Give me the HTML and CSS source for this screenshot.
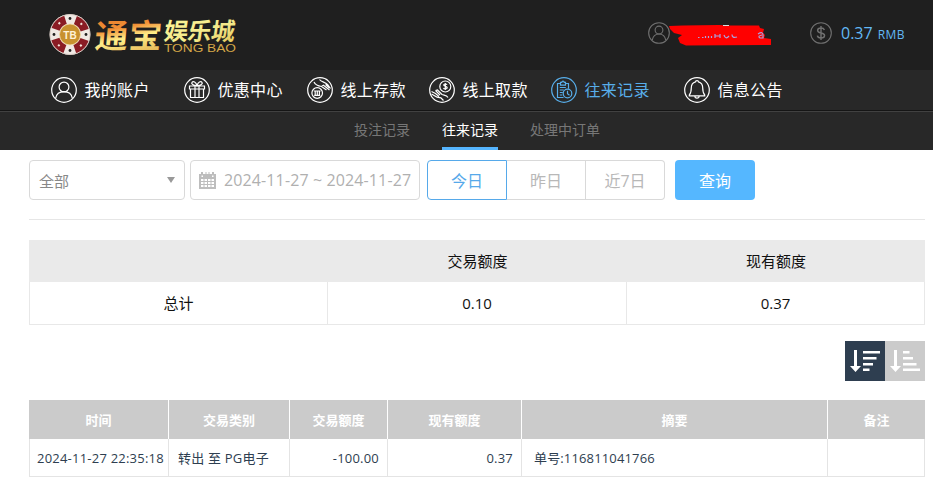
FILE: index.html
```html
<!DOCTYPE html>
<html lang="zh-CN">
<head>
    <meta charset="UTF-8">
    <meta name="viewport" content="width=device-width, initial-scale=1.0">
    <title>往来记录</title>
    <link rel="stylesheet" href="styles.css">
</head>
<body>
    <header class="header">
        <svg class="logo" width="190" height="46" viewBox="0 0 190 46">
            <defs>
                <linearGradient id="gold" x1="0" y1="0" x2="0.3" y2="1">
                    <stop offset="0" stop-color="#e3792b"/>
                    <stop offset="0.4" stop-color="#f08f35"/>
                    <stop offset="0.65" stop-color="#fff08a"/>
                    <stop offset="1" stop-color="#e8b95a"/>
                </linearGradient>
                <linearGradient id="yellow" x1="0" y1="0" x2="1" y2="1">
                    <stop offset="0" stop-color="#fff79a"/>
                    <stop offset="0.6" stop-color="#f3e98a"/>
                    <stop offset="1" stop-color="#e2c04f"/>
                </linearGradient>
            </defs>
            <!-- chip -->
            <circle cx="22" cy="22.5" r="20.3" fill="#f0e9e4"/>
            <circle cx="22" cy="22.5" r="15.5" fill="none" stroke="#8a1c24" stroke-width="9" stroke-dasharray="14.17 10.17" stroke-dashoffset="-5.09"/>
            <circle cx="22" cy="22.5" r="15.5" fill="none" stroke="#f4e6dc" stroke-width="2" stroke-dasharray="2 22.34" stroke-dashoffset="-11.17"/>
            <circle cx="22" cy="22.5" r="20" fill="none" stroke="#d8ccc4" stroke-width="1"/>
            <circle cx="22" cy="22.5" r="10.5" fill="#c8912f" stroke="#f0dcae" stroke-width="0.8"/>
            <g fill="#222">
                <circle cx="22" cy="6.500" r="1.400"/>
                <circle cx="22" cy="38.500" r="1.400"/>
                <circle cx="6" cy="22.500" r="1.400"/>
                <circle cx="38" cy="22.500" r="1.400"/>
            </g>
            <text class="logo-tb" x="22" y="26.5" text-anchor="middle">TB</text>
            <text class="logo-big" transform="translate(46 36) skewX(-5)" fill="url(#gold)" textLength="67" lengthAdjust="spacing">通宝</text>
            <text class="logo-mid" transform="translate(115 28) skewX(-8)" fill="url(#yellow)" textLength="71" lengthAdjust="spacing">娱乐城</text>
            <text class="logo-en" x="116" y="39.5" textLength="72" lengthAdjust="spacingAndGlyphs">TONG BAO</text>
        </svg>

        <div class="user">
            <svg class="info-icon" viewBox="0 0 26 26">
                <circle cx="13" cy="13" r="12.2"/>
                <circle cx="13" cy="9.5" r="4.6"/>
                <path d="M5 21.5c.8-4.8 4-7.4 8-7.4s7.2 2.6 8 7.4"/>
            </svg>
            <svg class="mask" width="106" height="26" viewBox="0 0 106 26">
                <path fill="#f00" d="M0 4L14 3.500 50 3 58 3.500 90 3.500 91 6 95 7 94 11 96 13 95 16 102 17 102 23 17 23.500 11 21 9 16 13 13 5 11 1 7z"/>
                <path fill="none" stroke="#a7a3e0" stroke-width="1.200" d="M29 15.500h1.500M33 15.500h1.500M36.500 16v-2M39.500 16v-2M42.500 16v-2M46 16v-4M51 16v-4M46 14h5M55 13q1.500 5 5 1M63 12.500q0 4 5 2.500M89 12q5-3 5 1v3h-3q-3-2 2-3"/>
                <path stroke="#ddd" stroke-width="1" d="M54 3.500h6"/>
            </svg>
        </div>

        <div class="balance">
            <svg class="info-icon" viewBox="0 0 26 26">
                <circle cx="13" cy="13" r="12.2"/>
                <path stroke-width="1.700" d="M17 9.500c-.5-1.500-1.900-2.300-4-2.300-2.300 0-4 1-4 2.900 0 4.300 8.200 1.500 8.200 5.900 0 1.900-1.800 3-4.200 3-2.300 0-4-1-4.300-2.800M13 4.800v16.500"/>
            </svg>
            <span class="amount">0.37</span>
            <span class="unit">RMB</span>
        </div>
    </header>

    <nav class="nav">
        <a class="nav-item">
            <svg class="nav-icon" viewBox="0 0 26 26">
                <circle cx="13" cy="13" r="12.3"/>
                <circle cx="13" cy="10" r="4.900"/>
                <path d="M4.600 21.500c.8-4.500 4-6.800 8.400-6.800s7.600 2.300 8.400 6.800"/>
            </svg>
            <span>我的账户</span>
        </a>
        <a class="nav-item">
            <svg class="nav-icon" viewBox="0 0 26 26">
                <circle cx="13" cy="13" r="12.3"/>
                <path d="M5.500 9h15v3h-15zM6.500 12v8.500h13V12M11 9v11.500M15 9v11.500M13 8.500C9 8.500 7 7 8 5.300c1.200-1.600 4-.3 5 3.200 1-3.500 3.800-4.800 5-3.200 1 1.700-1 3.200-5 3.200z"/>
            </svg>
            <span>优惠中心</span>
        </a>
        <a class="nav-item">
            <svg class="nav-icon" viewBox="0 0 26 26">
                <circle cx="13" cy="13" r="12.3"/>
                <circle cx="10.200" cy="16" r="5.300"/>
                <path d="M6.800 14h6.800M7.200 18.300h6M8.200 14v4M10.300 14v4M12.400 14v4M7 5c1.500 3.500 4.500 4 7.500 4.500M12.500 2.500c2 2.800 6 2.500 8.500 5.500l2.500 3.500M14.500 9.500l5 3.500M14.500 9.500l2-1.200 6 4.700M18.500 7.500l4 3.500"/>
            </svg>
            <span>线上存款</span>
        </a>
        <a class="nav-item">
            <svg class="nav-icon" viewBox="0 0 26 26">
                <circle cx="13" cy="13" r="12.3"/>
                <circle cx="16.300" cy="9.500" r="5.500"/>
                <path d="M18 7.700c-.5-1-3.300-1-3.300.4 0 1.600 3.500.9 3.500 2.700 0 1.500-3.200 1.500-3.700.3M16.300 6v7M2.500 14.500l4 2 3.500 3M6.500 13.500l4.500 4.500M2.500 17c3.500 1.500 5 4.500 9 3.500M6.500 13.500l2-.5 4.500 4.500c2 1 4.500.5 6 3M11.500 20.500l3 3"/>
            </svg>
            <span>线上取款</span>
        </a>
        <a class="nav-item active">
            <svg class="nav-icon" viewBox="0 0 26 26">
                <circle cx="13" cy="13" r="12.3"/>
                <path d="M12.500 20.500h-6v-14h3v1.700h5V6.500h3v5.300M9.500 6.500V5.300h1.300c.2-1.500 2.200-1.500 2.400 0h1.300v1.200M8.800 10.500h6M8.800 13h4M8.800 15.500h3M8.800 18h2.500"/>
                <circle cx="16.500" cy="16.500" r="4.300"/>
                <path d="M16.500 13.800v3l2 1.500"/>
            </svg>
            <span>往来记录</span>
        </a>
        <a class="nav-item">
            <svg class="nav-icon" viewBox="0 0 26 26">
                <circle cx="13" cy="13" r="12.3"/>
                <path d="M11.500 4.800c0-1.700 3-1.700 3 0 3 .8 4.200 3.200 4.200 6 0 4.200.5 5.500 2 7.200v.8H5.300V18c1.500-1.700 2-3 2-7.200 0-2.800 1.200-5.200 4.200-6zM10.800 19c.2 2.800 4.200 2.800 4.400 0"/>
            </svg>
            <span>信息公告</span>
        </a>
    </nav>

    <div class="sub-nav">
        <a>投注记录</a>
        <a class="active">往来记录</a>
        <a>处理中订单</a>
    </div>

    <main class="main">
        <div class="filters">
            <div class="select">
                <span>全部</span>
                <svg width="8" height="6" viewBox="0 0 8 6"><path fill="#999" d="M0 0h8L4 6z"/></svg>
            </div>
            <div class="date">
                <svg width="17" height="17" viewBox="0 0 17 17">
                    <path fill="#bdbdbd" d="M0 2h2V0h2v2h2.500V0h1v2h2V0h1v2H13V0h2v2h2v15H0z"/>
                    <path fill="#fff" d="M2 7h13v8H2zM2.500 3.500h1.500V5H2.500zM13 3.500h1.500V5H13z"/>
                    <path fill="none" stroke="#bdbdbd" stroke-width="1" d="M2 9.500h13M2 12.500h13M5 7v8M8.500 7v8M12 7v8"/>
                </svg>
                <span>2024-11-27 ~ 2024-11-27</span>
            </div>
            <div class="days">
                <button type="button" class="active">今日</button>
                <button type="button">昨日</button>
                <button type="button">近7日</button>
            </div>
            <button type="button" class="search">查询</button>
        </div>

        <table class="summary">
            <colgroup>
                <col class="col-label">
                <col class="col-trade">
                <col class="col-current">
            </colgroup>
            <tr>
                <th></th>
                <th>交易额度</th>
                <th>现有额度</th>
            </tr>
            <tr>
                <td>总计</td>
                <td>0.10</td>
                <td>0.37</td>
            </tr>
        </table>

        <div class="sort">
            <div class="sort-btn active">
                <svg width="40" height="40" viewBox="0 0 40 40">
                    <path fill="#fff" d="M9 9h3v16h4l-5.500 6L5 25h4zM18 10h17v2.500H18zM18 16h13.500v2.500H18zM18 22h10v2.500H18zM18 27.500h6.500V30H18z"/>
                </svg>
            </div>
            <div class="sort-btn">
                <svg width="40" height="40" viewBox="0 0 40 40">
                    <path fill="#fff" d="M9 9h3v16h4l-5.500 6L5 25h4zM18 10h6.500v2.500H18zM18 16h10v2.500H18zM18 22h13.500v2.500H18zM18 27.500h17V30H18z"/>
                </svg>
            </div>
        </div>

        <table class="records">
            <colgroup>
                <col class="col-time">
                <col class="col-type">
                <col class="col-amount">
                <col class="col-balance">
                <col class="col-summary">
                <col class="col-remark">
            </colgroup>
            <tr>
                <th>时间</th>
                <th>交易类别</th>
                <th>交易额度</th>
                <th>现有额度</th>
                <th>摘要</th>
                <th>备注</th>
            </tr>
            <tr>
                <td class="time">2024-11-27 22:35:18</td>
                <td class="type">转出 至 PG电子</td>
                <td class="num">-100.00</td>
                <td class="num">0.37</td>
                <td class="order">单号:116811041766</td>
                <td></td>
            </tr>
        </table>
    </main>
</body>
</html>
```
FILE: styles.css
```css
* {
    box-sizing: border-box;
}

body {
    margin: 0;
    height: 478px;
    overflow: hidden;
    background: #fff;
    font-family: "Open Sans", "Noto Sans CJK SC", sans-serif;
    color: #222;
}

/* header */
.header {
    display: flex;
    align-items: flex-start;
    height: 70px;
    padding-left: 48px;
    background: #1f1f1f;
}

.logo {
    margin-top: 12px;
}

.logo-tb {
    font: bold 10px "Liberation Sans", sans-serif;
    fill: #fff3d6;
}

.logo-big {
    font-size: 33px;
    font-weight: 700;
}

.logo-mid {
    font-size: 24px;
    font-weight: 700;
}

.logo-en {
    font: 10.5px "Liberation Sans", sans-serif;
    fill: #d6a848;
}

.user {
    display: flex;
    width: 162px;
    margin: 22px 0 0 410px;
}

.info-icon {
    flex: none;
    width: 22px;
    height: 22px;
    fill: none;
    stroke: #707070;
    stroke-width: 1.3;
}

.mask {
    margin-left: -1px;
}

.balance {
    display: flex;
    align-items: baseline;
    margin-top: 22px;
    line-height: 22px;
    color: #62b8f5;
}

.balance .info-icon {
    align-self: flex-start;
}

.amount {
    margin: 0 5px 0 9px;
    font-size: 16px;
}

.unit {
    font-size: 12px;
    letter-spacing: 0.5px;
}

/* main nav */
.nav {
    display: grid;
    grid-template-columns: 133px 123px 122px 122px 133px 100px;
    align-items: center;
    height: 40px;
    padding-left: 51px;
    background: #282828;
}

.nav-item {
    display: flex;
    align-items: center;
    gap: 7.5px;
    font-size: 16px;
    line-height: 26px;
    letter-spacing: 0.3px;
    color: #fff;
    white-space: nowrap;
}

.nav-item.active {
    color: #58aeea;
}

.nav-icon {
    width: 26px;
    height: 26px;
    fill: none;
    stroke: currentColor;
    stroke-width: 1.2;
}

.sub-nav {
    display: flex;
    gap: 32px;
    height: 40px;
    padding-left: 354px;
    border-top: 1px solid #151515;
    box-shadow: inset 0 1px #414141;
    background: #282828;
    font-size: 14px;
    line-height: 38px;
    color: #777;
}

.sub-nav .active {
    color: #fff;
    border-bottom: 3px solid #55b5ff;
}

/* filters */
.main {
    padding: 10px 8px 0 29px;
}

.filters {
    display: flex;
    height: 60px;
    padding-bottom: 19px;
    border-bottom: 1px solid #e6e6e6;
    font-size: 16px;
    color: #b0b0b0;
}

.select,
.date {
    display: flex;
    align-items: center;
    height: 40px;
    border: 1px solid #d9d9d9;
    border-radius: 4px;
}

.select {
    justify-content: space-between;
    width: 156px;
    padding: 0 9px;
    font-size: 15px;
    color: #888;
}

.date {
    width: 230px;
    margin: 0 7px 0 5px;
    padding-left: 8px;
    gap: 8px;
    letter-spacing: 0.12px;
    white-space: nowrap;
}

.days {
    display: flex;
}

.filters button {
    height: 40px;
    padding: 0;
    font-family: inherit;
    font-size: 16px;
}

.days button {
    width: 79px;
    border: 1px solid #d9d9d9;
    border-left: 0;
    background: #fff;
    color: #b8b8b8;
}

.days button:last-child {
    border-radius: 0 4px 4px 0;
}

.days .active {
    width: 80px;
    border: 1px solid #56a9ea;
    border-radius: 4px 0 0 4px;
    color: #56a9ea;
}

.filters .search {
    width: 80px;
    margin-left: 10px;
    border: 0;
    border-radius: 4px;
    background: #55b7ff;
    color: #fff;
}

/* tables */
table {
    width: 896px;
    table-layout: fixed;
    border-collapse: separate;
    border-spacing: 0;
}

.summary {
    margin-top: 20px;
    font-size: 15px;
    text-align: center;
    color: #111;
}

.col-label { width: 299px; }
.col-trade { width: 299px; }
.col-current { width: 298px; }

.summary th {
    height: 42px;
    padding: 0 0 2px;
    background: #eaeaea;
    font-weight: 400;
}

.summary td {
    height: 43px;
    padding: 0 0 1px;
    border-right: 1px solid #e8e8e8;
    border-bottom: 1px solid #e8e8e8;
}

.summary td:first-child {
    border-left: 1px solid #e8e8e8;
}

.sort {
    display: flex;
    justify-content: flex-end;
    height: 40px;
    margin: 16px 0 19px;
}

.sort-btn {
    width: 40px;
    height: 40px;
    background: #cbcbcb;
}

.sort-btn.active {
    background: #2e3e50;
}

.sort-btn svg {
    display: block;
}

.records {
    font-size: 13px;
    color: #2e3e50;
}

.col-time { width: 140px; }
.col-type { width: 121px; }
.col-amount { width: 98px; }
.col-balance { width: 134px; }
.col-summary { width: 306px; }
.col-remark { width: 97px; }

.records th {
    height: 39px;
    padding: 0 0 1px;
    border-right: 1px solid #fff;
    background: #cbcbcb;
    color: #fff;
}

.records th:last-child {
    border-right: 0;
}

.records td {
    height: 38px;
    padding: 0 8px 0 9px;
    border-right: 1px solid #e4e4e4;
    border-bottom: 1px solid #e4e4e4;
    white-space: nowrap;
}

.records .time {
    padding: 0 0 0 7px;
    border-left: 1px solid #e4e4e4;
    letter-spacing: 0.22px;
}

.records .type {
    letter-spacing: 0.2px;
}

.records .num {
    text-align: right;
    letter-spacing: 0.2px;
}

.records .order {
    padding-left: 12px;
    letter-spacing: 0.15px;
}
```
